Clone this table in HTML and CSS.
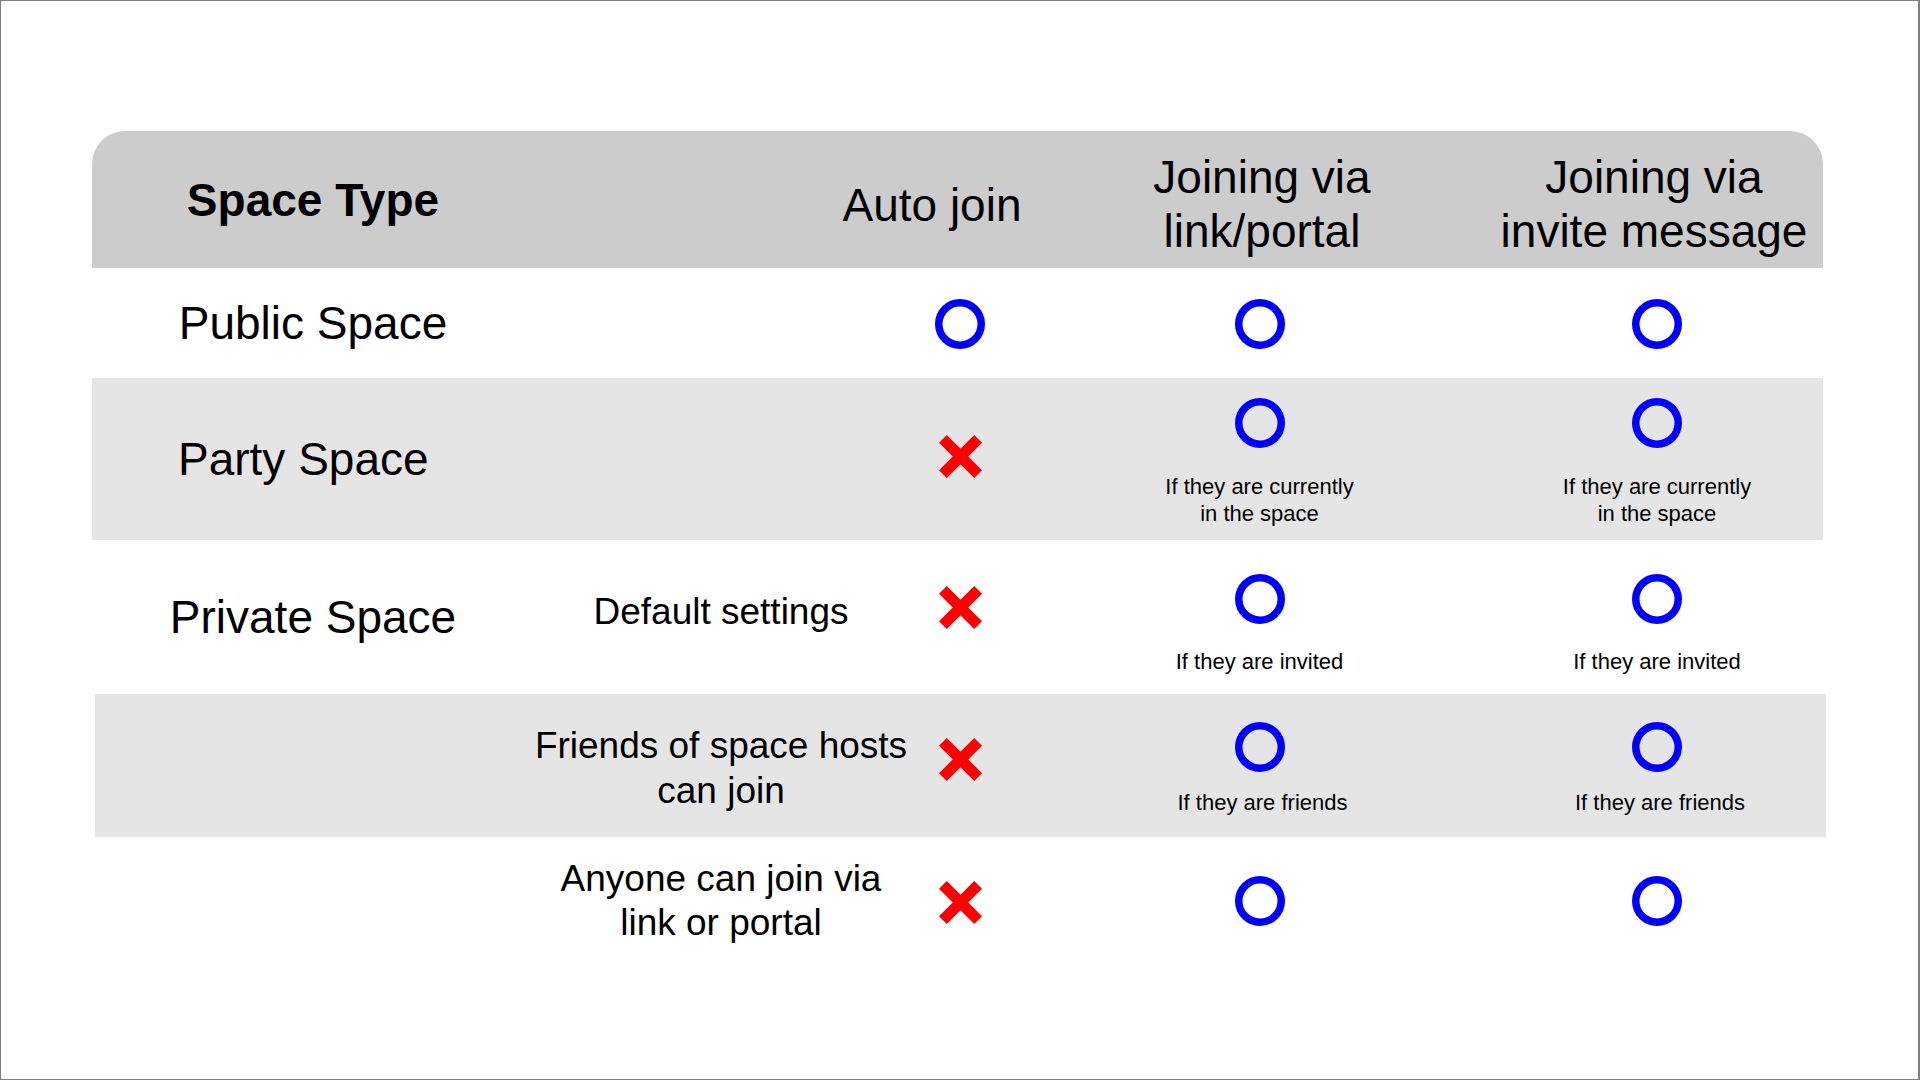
FILE: index.html
```html
<!DOCTYPE html>
<html lang="en">
<head>
<meta charset="utf-8">
<title>Space Types</title>
<link rel="stylesheet" href="styles.css">
</head>
<body>
<div class="frame">
  <div class="table">
    <div class="head">
      <div class="hcell h-type">Space Type</div>
      <div class="hcell"></div>
      <div class="hcell h-auto">Auto join</div>
      <div class="hcell h-two">Joining via<br>link/portal</div>
      <div class="hcell h-two">Joining via<br>invite message</div>
    </div>

    <div class="row row-public">
      <div class="cell name">Public Space</div>
      <div class="cell"></div>
      <div class="cell"><svg class="ok" width="50" height="50" viewBox="0 0 50 50"><circle cx="25" cy="25" r="21.25" fill="none" stroke="#0000ff" stroke-width="7.5"/></svg></div>
      <div class="cell"><svg class="ok" width="50" height="50" viewBox="0 0 50 50"><circle cx="25" cy="25" r="21.25" fill="none" stroke="#0000ff" stroke-width="7.5"/></svg></div>
      <div class="cell"><svg class="ok" width="50" height="50" viewBox="0 0 50 50"><circle cx="25" cy="25" r="21.25" fill="none" stroke="#0000ff" stroke-width="7.5"/></svg></div>
    </div>

    <div class="row row-party shaded">
      <div class="cell name name-left">Party Space</div>
      <div class="cell"></div>
      <div class="cell"><svg class="no" width="43" height="43" viewBox="0 0 43 43"><path d="M3.9 3.9L39.1 39.1M39.1 3.9L3.9 39.1" stroke="#ff0000" stroke-width="11"/></svg></div>
      <div class="cell"><svg class="ok" width="50" height="50" viewBox="0 0 50 50"><circle cx="25" cy="25" r="21.25" fill="none" stroke="#0000ff" stroke-width="7.5"/></svg><div class="note">If they are currently<br>in the space</div></div>
      <div class="cell"><svg class="ok" width="50" height="50" viewBox="0 0 50 50"><circle cx="25" cy="25" r="21.25" fill="none" stroke="#0000ff" stroke-width="7.5"/></svg><div class="note">If they are currently<br>in the space</div></div>
    </div>

    <div class="row row-private">
      <div class="cell name">Private Space</div>
      <div class="cell"><div class="sub">Default settings</div></div>
      <div class="cell"><svg class="no" width="43" height="43" viewBox="0 0 43 43"><path d="M3.9 3.9L39.1 39.1M39.1 3.9L3.9 39.1" stroke="#ff0000" stroke-width="11"/></svg></div>
      <div class="cell"><svg class="ok" width="50" height="50" viewBox="0 0 50 50"><circle cx="25" cy="25" r="21.25" fill="none" stroke="#0000ff" stroke-width="7.5"/></svg><div class="note">If they are invited</div></div>
      <div class="cell"><svg class="ok" width="50" height="50" viewBox="0 0 50 50"><circle cx="25" cy="25" r="21.25" fill="none" stroke="#0000ff" stroke-width="7.5"/></svg><div class="note">If they are invited</div></div>
    </div>

    <div class="row row-friends shaded">
      <div class="cell"></div>
      <div class="cell"><div class="sub">Friends of space hosts<br>can join</div></div>
      <div class="cell"><svg class="no" width="43" height="43" viewBox="0 0 43 43"><path d="M3.9 3.9L39.1 39.1M39.1 3.9L3.9 39.1" stroke="#ff0000" stroke-width="11"/></svg></div>
      <div class="cell"><svg class="ok" width="50" height="50" viewBox="0 0 50 50"><circle cx="25" cy="25" r="21.25" fill="none" stroke="#0000ff" stroke-width="7.5"/></svg><div class="note">If they are friends</div></div>
      <div class="cell"><svg class="ok" width="50" height="50" viewBox="0 0 50 50"><circle cx="25" cy="25" r="21.25" fill="none" stroke="#0000ff" stroke-width="7.5"/></svg><div class="note">If they are friends</div></div>
    </div>

    <div class="row row-anyone">
      <div class="cell"></div>
      <div class="cell"><div class="sub">Anyone can join via<br>link or portal</div></div>
      <div class="cell"><svg class="no" width="43" height="43" viewBox="0 0 43 43"><path d="M3.9 3.9L39.1 39.1M39.1 3.9L3.9 39.1" stroke="#ff0000" stroke-width="11"/></svg></div>
      <div class="cell"><svg class="ok" width="50" height="50" viewBox="0 0 50 50"><circle cx="25" cy="25" r="21.25" fill="none" stroke="#0000ff" stroke-width="7.5"/></svg></div>
      <div class="cell"><svg class="ok" width="50" height="50" viewBox="0 0 50 50"><circle cx="25" cy="25" r="21.25" fill="none" stroke="#0000ff" stroke-width="7.5"/></svg></div>
    </div>
  </div>
</div>
</body>
</html>
```

FILE: styles.css
```css
* { box-sizing: border-box; }

html, body {
  margin: 0;
  padding: 0;
  background: #ffffff;
}

body {
  font-family: "Liberation Sans", Arial, Helvetica, sans-serif;
  color: #000000;
}

.frame {
  width: 1920px;
  height: 1080px;
  border: 1px solid #7f7f7f;
  border-right-width: 2px;
  padding: 130px 0 0 91px;
  overflow: hidden;
}

.table {
  width: 1731px;
  display: flex;
  flex-direction: column;
}

/* header */
.head {
  height: 137px;
  background: #cccccc;
  border-radius: 33px 33px 0 0;
  display: grid;
  grid-template-columns: 442px 296px 204px 456px 328px;
  padding-right: 5px;
}

.hcell {
  display: flex;
  flex-direction: column;
  align-items: center;
  justify-content: center;
  text-align: center;
  font-size: 46px;
  white-space: nowrap;
}

.h-type { font-weight: 700; }

.h-auto { padding-top: 10px; }

.h-two {
  line-height: 54px;
  padding-top: 9px;
}

/* body rows */
.row {
  display: grid;
  grid-template-columns: 442px 374px 104px 495px 300px;
  padding-right: 16px;
}

.shaded { background: #e5e5e5; }

.row-public  { height: 110px; }
.row-party   { height: 162px; }
.row-private { height: 154px; }
.row-friends {
  height: 143px;
  margin-left: 3px;
  margin-right: -3px;
  grid-template-columns: 439px 374px 104px 495px 300px;
  padding-right: 19px;
}
.row-anyone  { height: 128px; }

.cell {
  display: flex;
  flex-direction: column;
  align-items: center;
  justify-content: center;
  text-align: center;
  white-space: nowrap;
}

.cell svg { display: block; flex: none; }

.name { font-size: 46px; }

.name-left {
  align-items: flex-start;
  padding-left: 86px;
}

.sub {
  font-size: 37px;
  line-height: 45px;
}

.note {
  font-size: 22px;
  line-height: 27px;
}

/* per-row fine alignment */
.row-public .ok { margin-top: 2px; }

.row-party .no { margin-bottom: 6px; }
.row-party .ok { margin-top: 7px; }
.row-party .note { margin-top: 25px; }

.row-private .sub { margin-bottom: 12px; }
.row-private .no { margin-bottom: 20px; }
.row-private .ok { margin-top: 15px; }
.row-private .note { margin-top: 24px; }

.row-friends .sub { margin-top: 5px; }
.row-friends .no { margin-bottom: 13px; }
.row-friends .ok { margin-top: 7px; }
.row-friends .note { margin-top: 17px; margin-left: 6px; }

.row-anyone .sub { line-height: 44px; }
.row-anyone .no { margin-top: 2px; }
```
